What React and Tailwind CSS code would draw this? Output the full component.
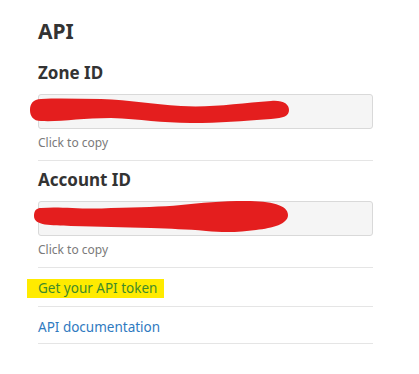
const CopyField = ({ label, children }) => (
  <div className="border-b border-[#e5e5e5] pb-[8px]">
    <h3 className="text-[17px] font-bold text-[#333] leading-[24px]">{label}</h3>
    <div className="relative mt-[9px] h-[35px] w-full rounded-[3px] border border-[#d9d9d9] bg-[#f5f5f5]">
      {children}
    </div>
    <div className="mt-[5px] text-[12px] leading-[18px] text-[#7a7a7a]">Click to copy</div>
  </div>
)

export default function App() {
  return (
    <div className="min-h-screen bg-white font-['Noto_Sans','Open_Sans',sans-serif]">
      <div className="ml-[38px] w-[335px] pt-[17px]">
        <h2 className="text-[21px] font-bold leading-[28px] text-[#333]">API</h2>
        <div className="mt-[16px]">
          <CopyField label="Zone ID">
            <svg className="absolute left-[-21px] top-[-11px]" width="300" height="60" viewBox="17 83 300 60">
              <path
                d="M40 98 C60 97 80 98 100 98 C130 99 150 103 180 105 C210 107 240 102 270 100 C282 99 288 103 288 109 C288 115 283 117 270 118 C240 120 220 122 190 122 C160 122 140 118 110 117 C80 117 60 121 40 120 C32 120 29 115 29 109 C29 103 32 98 40 98 Z"
                fill="#e41e1e"
              />
            </svg>
          </CopyField>
          <div className="pt-[7px]">
            <CopyField label="Account ID">
              <svg className="absolute left-[-21px] top-[-11px]" width="300" height="60" viewBox="17 191 300 60">
                <path
                  d="M40 208 C60 206 80 210 110 208 C140 207 160 207 180 205 C200 203 220 201 245 201 C270 201 287 205 287 215 C287 224 272 228 255 230 C240 232 225 233 205 231 C185 229 170 229 150 228 C120 227 100 227 70 226 C50 225 33 226 33 216 C33 210 36 208 40 208 Z"
                  fill="#e41e1e"
                />
              </svg>
            </CopyField>
          </div>
          <div className="border-b border-[#e5e5e5] pt-[12px] pb-[9px]">
            <a className="relative block w-fit text-[13.5px] leading-[17px]">
              <span className="absolute left-[-11px] right-[-7px] top-[-1px] bottom-[-1px] bg-[#ffeb00]" />
              <span className="relative text-[#3f8a2a]">Get your API token</span>
            </a>
          </div>
          <div className="border-b border-[#e5e5e5] pt-[12px] pb-[7px]">
            <a className="block text-[13.5px] leading-[17px] text-[#2f7abf]">API documentation</a>
          </div>
        </div>
      </div>
    </div>
  )
}
